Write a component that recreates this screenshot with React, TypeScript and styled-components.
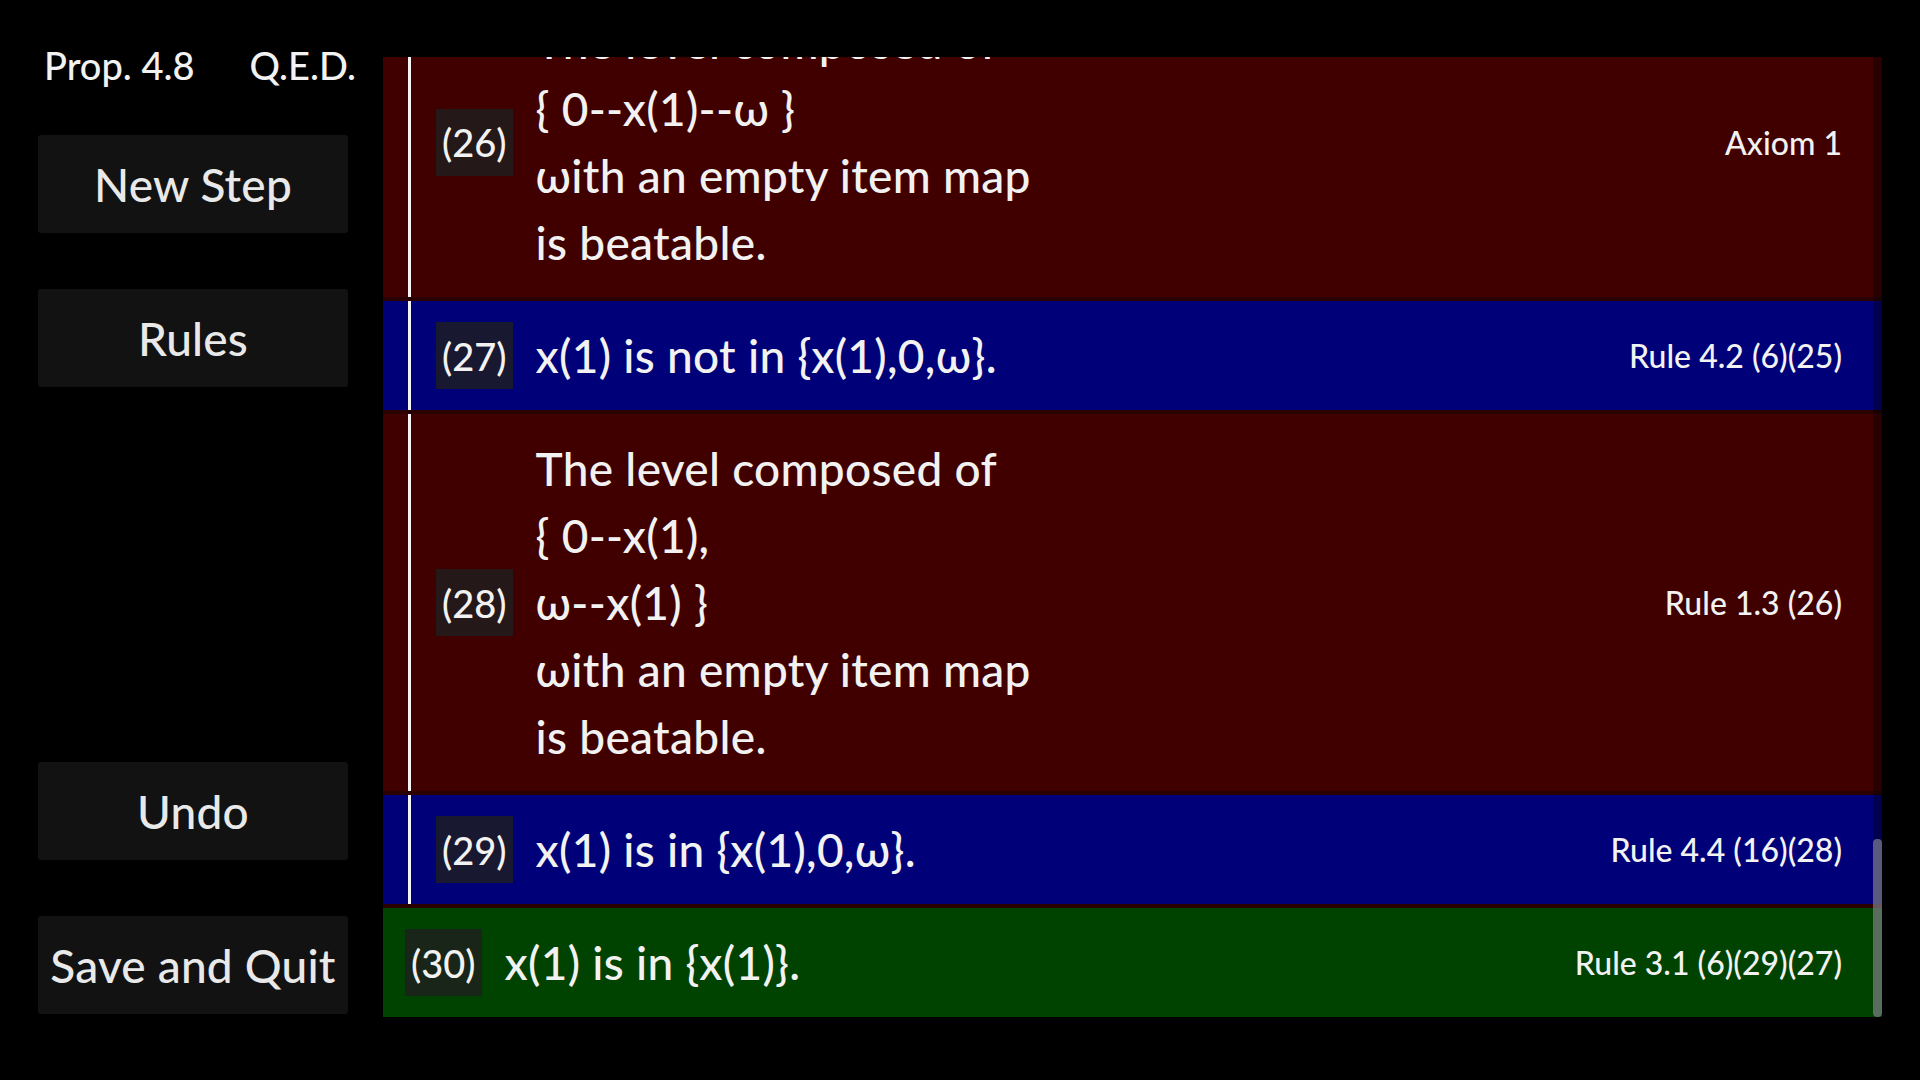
import styled, { createGlobalStyle } from "styled-components";

type Step = {
	num: number;
	lines: string[];
	rule: string;
	tone: "red" | "blue" | "green";
	nested?: boolean;
};

const steps: Step[] = [
	{
		num: 26,
		lines: ["The level composed of", "{ 0--x(1)--ω }", "ωith an empty item map", "is beatable."],
		rule: "Axiom 1",
		tone: "red",
		nested: true,
	},
	{ num: 27, lines: ["x(1) is not in {x(1),0,ω}."], rule: "Rule 4.2 (6)(25)", tone: "blue", nested: true },
	{
		num: 28,
		lines: ["The level composed of", "{ 0--x(1),", "ω--x(1) }", "ωith an empty item map", "is beatable."],
		rule: "Rule 1.3 (26)",
		tone: "red",
		nested: true,
	},
	{ num: 29, lines: ["x(1) is in {x(1),0,ω}."], rule: "Rule 4.4 (16)(28)", tone: "blue", nested: true },
	{ num: 30, lines: ["x(1) is in {x(1)}."], rule: "Rule 3.1 (6)(29)(27)", tone: "green" },
];

const tones = {
	red: "#400000",
	blue: "#000078",
	green: "#004200",
};

const App = () => {
	return (
		<>
			<GlobalStyle />
			<StyledPage>
				<StyledSidebar>
					<StyledHeader>
						<span>Prop. 4.8</span>
						<span>Q.E.D.</span>
					</StyledHeader>
					<StyledButton>New Step</StyledButton>
					<StyledButton>Rules</StyledButton>
					<StyledButton $pushDown>Undo</StyledButton>
					<StyledButton>Save and Quit</StyledButton>
				</StyledSidebar>

				<StyledPanel>
					<StyledSteps>
						{steps.map((step) => (
							<StyledRow key={step.num} $tone={tones[step.tone]} $nested={!!step.nested}>
								<StyledRowInner $nested={!!step.nested}>
									<StyledBadge>({step.num})</StyledBadge>
									<StyledStatement>
										{step.lines.map((line, i) => (
											<div key={i}>{line}</div>
										))}
									</StyledStatement>
									<StyledRule>{step.rule}</StyledRule>
								</StyledRowInner>
							</StyledRow>
						))}
					</StyledSteps>
					<StyledTrack>
						<StyledThumb />
					</StyledTrack>
				</StyledPanel>
			</StyledPage>
		</>
	);
};

const GlobalStyle = createGlobalStyle`
	html, body {
		margin: 0;
		background: #000;
	}

	body {
		color: #f2f2f2;
		font-family: Lato, "Noto Sans", "DejaVu Sans", sans-serif;
		font-weight: 500;
	}
`;

const StyledPage = styled.div`
	box-sizing: border-box;
	display: flex;
	gap: 35px;
	height: 100vh;
	padding: 43px 38px 63px 38px;
	width: 100vw;
`;

const StyledSidebar = styled.div`
	display: flex;
	flex: 0 0 310px;
	flex-direction: column;
	gap: 56px;
	min-width: 0;
	padding-bottom: 3px;
`;

const StyledHeader = styled.div`
	display: flex;
	font-size: 38px;
	gap: 55px;
	line-height: 45px;
	margin-bottom: -9px;
	padding-left: 6px;
	white-space: nowrap;
`;

const StyledButton = styled.div<{ $pushDown?: boolean }>`
	align-items: center;
	background: #121212;
	border-radius: 3px;
	color: #e9e9e9;
	display: flex;
	font-size: 46px;
	height: 98px;
	justify-content: center;
	letter-spacing: 0.2px;
	margin-top: ${(p) => (p.$pushDown ? "auto" : "0")};
	white-space: nowrap;
`;

const StyledPanel = styled.div`
	flex: 1;
	margin-top: 14px;
	min-width: 0;
	position: relative;
`;

const StyledSteps = styled.div`
	background: #2a0000;
	display: flex;
	flex-direction: column;
	gap: 4px;
	height: 100%;
	justify-content: flex-end;
	overflow: hidden;
`;

const StyledRow = styled.div<{ $tone: string; $nested: boolean }>`
	background: ${(p) => p.$tone};
	display: flex;
	flex-shrink: 0;
	padding-left: ${(p) => (p.$nested ? "25px" : "22px")};
`;

const StyledRowInner = styled.div<{ $nested: boolean }>`
	align-items: center;
	border-left: ${(p) => (p.$nested ? "3px solid #f4f4f4" : "none")};
	display: flex;
	flex: 1;
	padding: 21px 40px 21px ${(p) => (p.$nested ? "25px" : "0")};
`;

const StyledBadge = styled.div`
	align-items: center;
	background: rgba(30, 30, 30, 0.8);
	display: flex;
	flex: 0 0 auto;
	font-size: 38px;
	height: 67px;
	justify-content: center;
	margin-right: 23px;
	padding: 0 6px;
`;

const StyledStatement = styled.div`
	flex: 1;
	font-size: 46px;
	letter-spacing: 0.3px;
	line-height: 67px;
`;

const StyledRule = styled.div`
	font-size: 32px;
	white-space: nowrap;
`;

const StyledTrack = styled.div`
	background: rgba(0, 0, 0, 0.35);
	bottom: 0;
	display: flex;
	flex-direction: column;
	justify-content: flex-end;
	position: absolute;
	right: 0;
	top: 0;
	width: 9px;
`;

const StyledThumb = styled.div`
	background: rgba(150, 150, 160, 0.6);
	border-radius: 4px;
	height: 178px;
`;

export default App;
